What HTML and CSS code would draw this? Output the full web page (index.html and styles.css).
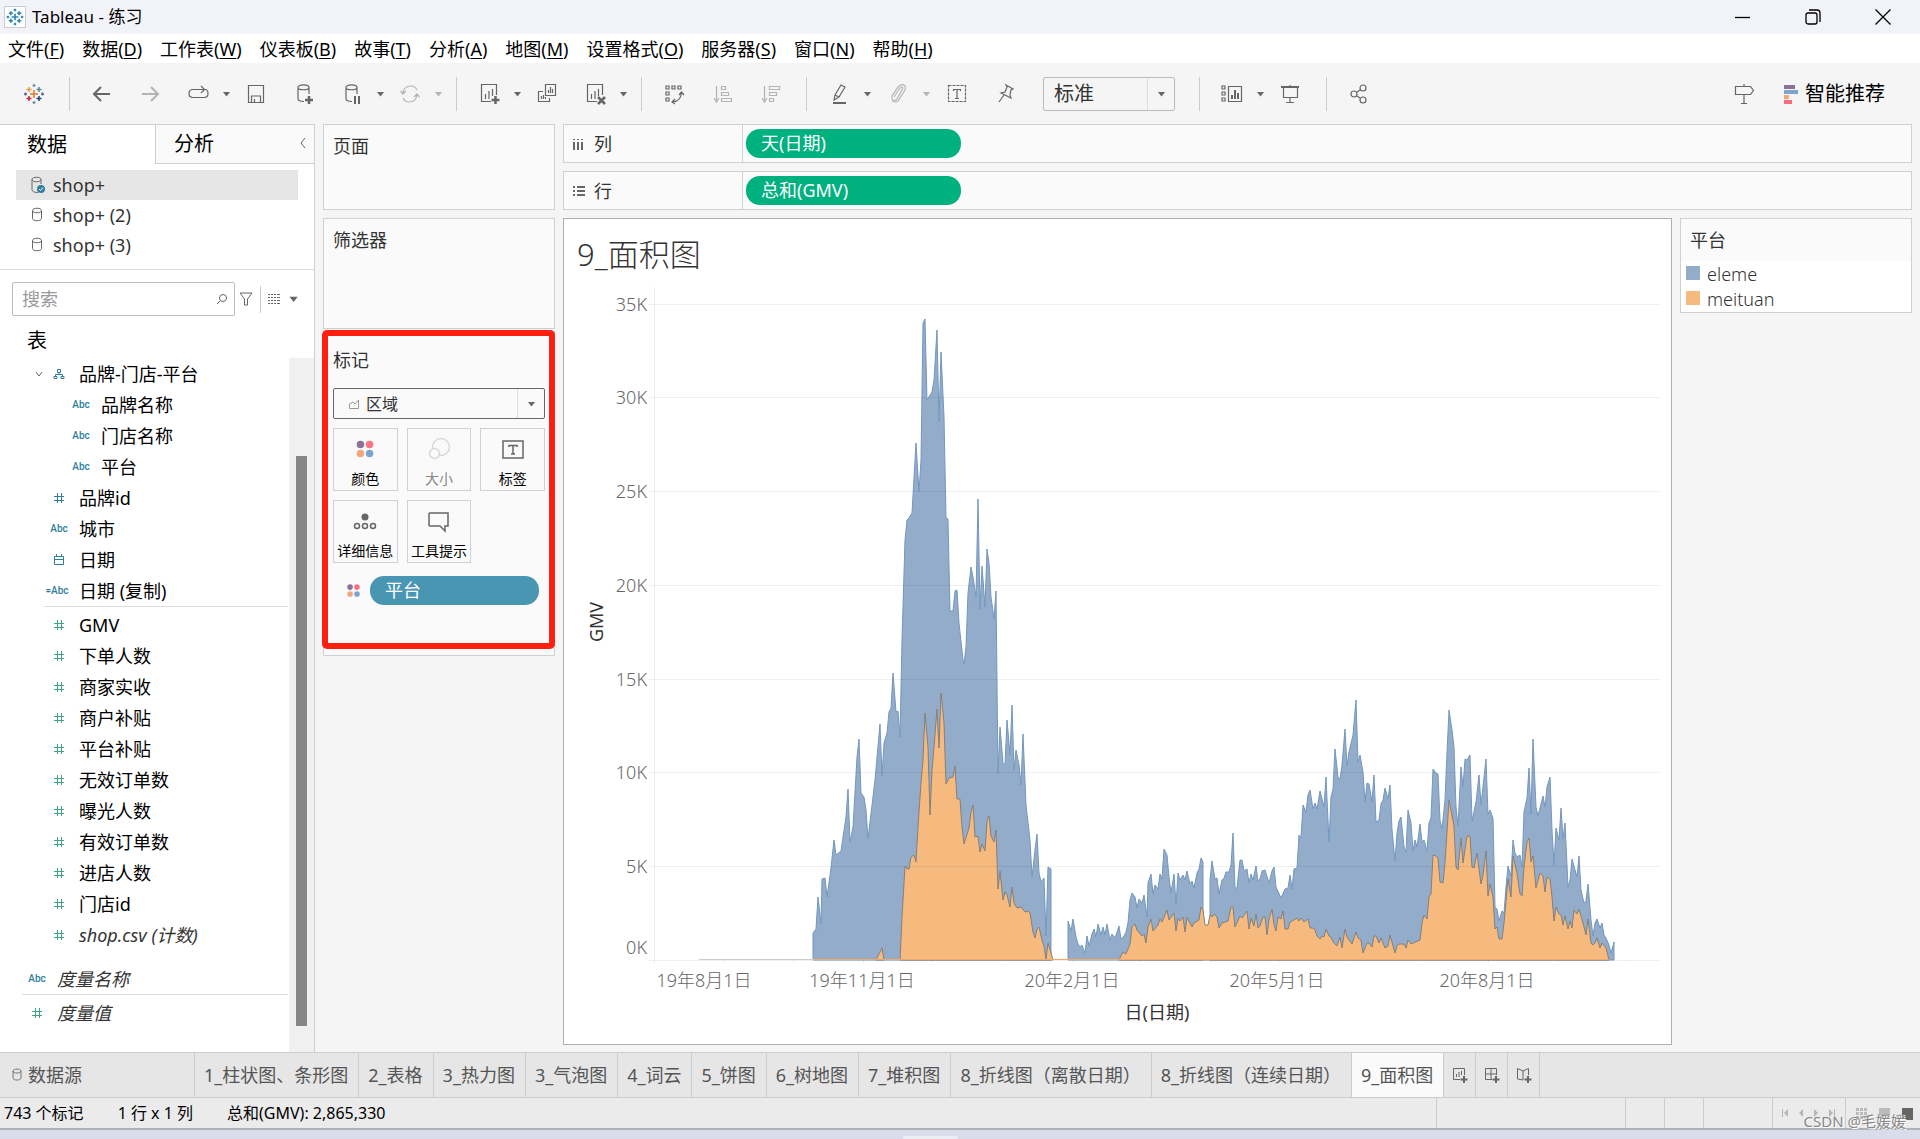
FILE: index.html
```html
<!DOCTYPE html>
<html lang="zh-CN">
<head>
<meta charset="utf-8">
<title>Tableau - 练习</title>
<meta name="viewport" content="width=device-width, initial-scale=1">
<link rel="stylesheet" href="styles.css">
</head>
<body>
<svg class="defs" aria-hidden="true">
  <symbol id="logo" viewBox="0 0 24 24"><path d="M12 8v8M8 12h8M7 5v5M4.500 7.500h5M17 5v5M14.500 7.500h5M7 14v5M4.500 16.500h5M17 14v5M14.500 16.500h5M12 2v3M10.500 3.500h3M12 19v3M10.500 20.500h3M3.500 10.500v3M2 12h3M20.500 10.500v3M19 12h3"/></symbol>
  <symbol id="caret" viewBox="0 0 12 12"><path class="solid" d="M3 4h7L6.500 8.500z"/></symbol>
  <symbol id="hash" viewBox="0 0 12 12"><path d="M4.500 1v10M8.500 1v10M1 4.500h10M1 8.500h10"/></symbol>
  <symbol id="db" viewBox="0 0 12 16"><path d="M1.500 3.500v8c0 3 9 3 9 0v-8M1.500 3.500c0-3 9-3 9 0s-9 3-9 0z"/></symbol>
  <symbol id="sheet-chart" viewBox="0 0 24 24"><path d="M14 19.500H4.500v-17h15V13M8.500 17v-5M12 17V9M15.500 14V7"/></symbol>
  <symbol id="dots" viewBox="0 0 24 24"><circle cx="6.500" cy="6.500" r="4.500" fill="#8a7299"/><circle cx="17.500" cy="6.500" r="4.500" fill="#fa7484"/><circle cx="6.500" cy="17.500" r="4.500" fill="#f2a77b"/><circle cx="17.500" cy="17.500" r="4.500" fill="#7fa4cc"/></symbol>
</svg>

<header class="titlebar">
  <svg class="app-icon"><use href="#logo"/></svg>
  <h1>Tableau - 练习</h1>
  <div class="window-buttons">
    <button type="button" aria-label="最小化"><svg viewBox="0 0 18 18"><path d="M1 9.500h15"/></svg></button>
    <button type="button" aria-label="还原"><svg viewBox="0 0 18 18"><path d="M5 2h8q3 0 3 3v9"/><rect x="2" y="5" width="11" height="11" rx="2"/></svg></button>
    <button type="button" aria-label="关闭"><svg viewBox="0 0 18 18"><path d="M1.500 1.500l15 15M16.500 1.500l-15 15"/></svg></button>
  </div>
</header>

<nav class="menubar" aria-label="菜单">
  <button type="button">文件(<u>F</u>)</button><button type="button">数据(<u>D</u>)</button><button type="button">工作表(<u>W</u>)</button><button type="button">仪表板(<u>B</u>)</button><button type="button">故事(<u>T</u>)</button><button type="button">分析(<u>A</u>)</button><button type="button">地图(<u>M</u>)</button><button type="button">设置格式(<u>O</u>)</button><button type="button">服务器(<u>S</u>)</button><button type="button">窗口(<u>N</u>)</button><button type="button">帮助(<u>H</u>)</button>
</nav>

<div class="toolbar" role="toolbar" aria-label="工具栏">
  <button type="button" class="tool home" aria-label="起始页"><svg viewBox="0 0 24 24"><path stroke="#e8762c" d="M12 8v8M8 12h8"/><path stroke="#eb9b3c" d="M7 5v5M4.500 7.500h5"/><path stroke="#59879b" d="M17 5v5M14.500 7.500h5"/><path stroke="#c72037" d="M7 14v5M4.500 16.500h5"/><path stroke="#1f447e" d="M17 14v5M14.500 16.500h5"/><path stroke="#7b8fb5" d="M12 2v3M10.500 3.500h3M12 19v3M10.500 20.500h3"/><path stroke="#5b6591" d="M3.500 10.500v3M2 12h3M20.500 10.500v3M19 12h3"/></svg></button>
  <div class="group">
    <button type="button" class="tool" aria-label="撤消"><svg viewBox="0 0 24 24"><path stroke-width="2" d="M4 12h16M11 5l-7 7 7 7"/></svg></button>
    <button type="button" class="tool off" aria-label="重做"><svg viewBox="0 0 24 24"><path stroke-width="2" d="M4 12h16M13 5l7 7-7 7"/></svg></button>
    <div class="split"><button type="button" class="tool" aria-label="重播"><svg viewBox="0 0 24 24"><path d="M9 15.500H7q-4 0-4-4t4-4h11M15 4l3.500 3.500L15 11M19 7.500q3 0 3 4t-4 4H9"/></svg></button><button type="button" class="drop" aria-label="更多"><svg><use href="#caret"/></svg></button></div>
    <button type="button" class="tool" aria-label="保存"><svg viewBox="0 0 24 24"><path d="M4.500 3.500h15v17h-15zM7.500 20v-6h9v6M10.500 20v-3"/></svg></button>
    <button type="button" class="tool" aria-label="新建数据源"><svg viewBox="0 0 24 24"><path d="M12 19.500q-6 0-6-3v-11c0-3.500 11-3.500 11 0V12M6 5.500c0 3 11 3 11 0"/><path stroke-width="2.500" d="M17 14v8M13 18h8"/></svg></button>
    <div class="split"><button type="button" class="tool" aria-label="暂停更新"><svg viewBox="0 0 24 24"><path d="M12 19.500q-6 0-6-3v-11c0-3.500 11-3.500 11 0V12M6 5.500c0 3 11 3 11 0"/><path stroke-width="2" d="M15 14v8M19 14v8"/></svg></button><button type="button" class="drop" aria-label="更多"><svg><use href="#caret"/></svg></button></div>
    <div class="split off"><button type="button" class="tool" aria-label="运行更新"><svg viewBox="0 0 24 24"><path d="M5 11q1-7 8-7 4 0 6 4M19 13q-1 7-8 7-4 0-6-4M2.500 9L5 12l3-3M16 15l3-3 2.500 3"/></svg></button><button type="button" class="drop" aria-label="更多"><svg><use href="#caret"/></svg></button></div>
  </div>
  <div class="group">
    <div class="split"><button type="button" class="tool" aria-label="新建工作表"><svg viewBox="0 0 24 24"><use href="#sheet-chart"/><path stroke-width="2.500" d="M18.500 14v8M14.500 18h8"/></svg></button><button type="button" class="drop" aria-label="更多"><svg><use href="#caret"/></svg></button></div>
    <button type="button" class="tool" aria-label="复制工作表"><svg viewBox="0 0 24 24"><path d="M10.500 2.500h10v11h-10zM13.500 11V8M15.500 11V5M17.500 11V7M8 9.500H3.500v10h11V16M6.500 17v-3M8.500 17v-4M10.500 17v-2"/></svg></button>
    <div class="split"><button type="button" class="tool" aria-label="清除工作表"><svg viewBox="0 0 24 24"><use href="#sheet-chart"/><path stroke-width="2.500" d="M15 15l7 7M22 15l-7 7"/></svg></button><button type="button" class="drop" aria-label="更多"><svg><use href="#caret"/></svg></button></div>
  </div>
  <div class="group">
    <button type="button" class="tool" aria-label="交换行和列"><svg viewBox="0 0 24 24"><path d="M4 4h3v3H4zM10 4h3v3h-3zM16 4h3v3h-3zM4 10h3v3H4zM4 16h3v3H4zM19.500 10q0 9-9 10M17 13l2.500-3 2.500 3M13 17l-3 3 3 2"/></svg></button>
    <button type="button" class="tool off" aria-label="升序排序"><svg viewBox="0 0 24 24"><path d="M6.500 4v15M4 16l2.500 4L9 16M11.500 4.500h4v3h-4zM11.500 10.500h7v3h-7zM11.500 16.500h10v3h-10z"/></svg></button>
    <button type="button" class="tool off" aria-label="降序排序"><svg viewBox="0 0 24 24"><path d="M6.500 4v15M4 16l2.500 4L9 16M11.500 4.500h10v3h-10zM11.500 10.500h7v3h-7zM11.500 16.500h4v3h-4z"/></svg></button>
  </div>
  <div class="group wide">
    <div class="split"><button type="button" class="tool" aria-label="突出显示"><svg viewBox="0 0 24 24"><path d="M8 13l6-10 4 2-6 10zM8 13l-1 5 5-3"/><path stroke-width="2" d="M6 21h13"/></svg></button><button type="button" class="drop" aria-label="更多"><svg><use href="#caret"/></svg></button></div>
    <div class="split off"><button type="button" class="tool" aria-label="组成员"><svg viewBox="0 0 24 24"><path d="M8 15l6-9q2-2 3 0l-6 11q-3 3-5 0v-3l6-9q4-4 7-1 1 2 0 4l-7 11q-3 2-6 0"/></svg></button><button type="button" class="drop" aria-label="更多"><svg><use href="#caret"/></svg></button></div>
    <button type="button" class="tool" aria-label="显示标记标签"><svg viewBox="0 0 24 24"><rect x="3.500" y="3.500" width="17" height="16" stroke-dasharray="3 1"/><path d="M8.500 9V7.500h7V9M12 8v9M10 16.500h4"/></svg></button>
    <button type="button" class="tool" aria-label="固定轴"><svg viewBox="0 0 24 24"><path d="M12 3l7 4-2 1-1 5 1 3-10-5 4-1 2-5zM10 13l-5 7"/></svg></button>
    <div class="fit"><select aria-label="适合"><option>标准</option></select><svg><use href="#caret"/></svg></div>
  </div>
  <div class="group">
    <div class="split"><button type="button" class="tool" aria-label="显示卡"><svg viewBox="0 0 24 24"><path d="M2 4h3v3H2zM2 10h3v3H2zM2 16h3v3H2zM8.500 4.500h13v15h-13z"/><path stroke-width="2" d="M12 17v-4M15 17V8M18 17v-6"/></svg></button><button type="button" class="drop" aria-label="更多"><svg><use href="#caret"/></svg></button></div>
    <button type="button" class="tool" aria-label="演示模式"><svg viewBox="0 0 24 24"><path stroke-width="2" d="M3 5h18"/><path d="M5.500 6v9.500h14V6M12 3v2M12 16v5M8 20.500h8"/></svg></button>
  </div>
  <div class="group">
    <button type="button" class="tool" aria-label="共享"><svg viewBox="0 0 24 24"><circle cx="7" cy="12" r="3"/><circle cx="16" cy="6" r="3"/><circle cx="16" cy="18" r="3"/><path d="M10 10l3-2M10 14l3 2"/></svg></button>
  </div>
  <div class="toolbar-end">
    <button type="button" class="tool" aria-label="数据指南"><svg viewBox="0 0 24 24"><path d="M3.500 4.500h15l3 4-3 4h-15zM12 2v2M12 13v8M9 21.500h6"/></svg></button>
    <button type="button" class="showme"><svg viewBox="0 0 15 20"><path fill="#8a7299" d="M0 1h11v4H0z"/><path fill="#7fa4cc" d="M0 6h14v4H0z"/><path fill="#f2a77b" d="M0 11h5v4H0z"/><path fill="#fa6b7d" d="M0 16h8v4H0z"/></svg>智能推荐</button>
  </div>
</div>

<main class="workspace">
  <aside class="data-pane">
    <div class="pane-tabs"><button type="button" class="active">数据</button><button type="button">分析<svg viewBox="0 0 8 12"><path d="M6 1L2 6l4 5"/></svg></button></div>
    <ul class="sources">
      <li class="selected"><svg viewBox="0 0 16 20"><path d="M8 17.500q-6 0-6-3v-10c0-3 9-3 9 0V9M2 4.500c0 3 9 3 9 0"/><circle cx="11" cy="14" r="4" fill="#2f7e9e" stroke="none"/><path stroke="#fff" d="M9 14l1.500 1.500L13 12.500"/></svg>shop+</li>
      <li><svg viewBox="0 0 16 20"><use href="#db" width="12" height="16" x="1" y="2"/></svg>shop+ (2)</li>
      <li><svg viewBox="0 0 16 20"><use href="#db" width="12" height="16" x="1" y="2"/></svg>shop+ (3)</li>
    </ul>
    <div class="search-row">
      <div class="search"><input type="search" placeholder="搜索" aria-label="搜索字段"><svg viewBox="0 0 12 12"><circle cx="7" cy="5" r="3.500"/><path d="M4.500 7.500L1 11"/></svg></div>
      <button type="button" aria-label="筛选"><svg viewBox="0 0 16 16"><path d="M2 2h12L9.500 8v6h-3V8z"/></svg></button>
      <button type="button" class="view" aria-label="查看方式"><svg viewBox="0 0 14 14"><path d="M1 2.500h2M4 2.500h2M7 2.500h2M10 2.500h3M1 5.500h2M4 5.500h2M7 5.500h2M10 5.500h3M1 8.500h2M4 8.500h2M7 8.500h2M10 8.500h3M1 11.500h2M4 11.500h2M7 11.500h2M10 11.500h3"/></svg><svg class="small"><use href="#caret"/></svg></button>
    </div>
    <h2>表</h2>
    <div class="field-scroll">
      <div class="fields">
        <ul class="dims">
          <li class="folder"><svg class="chev" viewBox="0 0 10 10"><path d="M2 3l3 4 3-4"/></svg><span class="type"><svg viewBox="0 0 12 12"><path d="M4.500 1.500h3v3h-3zM1 8.500h3v2H1zM8 8.500h3v2H8zM6 5v1.500M2.500 8V6.500h7V8"/></svg></span>品牌-门店-平台</li>
          <li class="child"><span class="type">Abc</span>品牌名称</li>
          <li class="child"><span class="type">Abc</span>门店名称</li>
          <li class="child"><span class="type">Abc</span>平台</li>
          <li><span class="type"><svg><use href="#hash"/></svg></span>品牌id</li>
          <li><span class="type">Abc</span>城市</li>
          <li><span class="type"><svg viewBox="0 0 12 12"><path d="M1.500 2.500h9v8h-9zM1.500 5.500h9M3.500 0v2.500M8.500 0v2.500"/></svg></span>日期</li>
          <li><span class="type calc">=Abc</span>日期 (复制)</li>
        </ul>
        <ul class="measures">
          <li><span class="type"><svg><use href="#hash"/></svg></span>GMV</li>
          <li><span class="type"><svg><use href="#hash"/></svg></span>下单人数</li>
          <li><span class="type"><svg><use href="#hash"/></svg></span>商家实收</li>
          <li><span class="type"><svg><use href="#hash"/></svg></span>商户补贴</li>
          <li><span class="type"><svg><use href="#hash"/></svg></span>平台补贴</li>
          <li><span class="type"><svg><use href="#hash"/></svg></span>无效订单数</li>
          <li><span class="type"><svg><use href="#hash"/></svg></span>曝光人数</li>
          <li><span class="type"><svg><use href="#hash"/></svg></span>有效订单数</li>
          <li><span class="type"><svg><use href="#hash"/></svg></span>进店人数</li>
          <li><span class="type"><svg><use href="#hash"/></svg></span>门店id</li>
          <li class="auto"><span class="type"><svg><use href="#hash"/></svg></span>shop.csv (计数)</li>
        </ul>
        <ul class="dims root"><li class="auto"><span class="type">Abc</span>度量名称</li></ul>
        <ul class="measures root"><li class="auto"><span class="type"><svg><use href="#hash"/></svg></span>度量值</li></ul>
      </div>
      <div class="scrollbar"><div class="thumb"></div></div>
    </div>
  </aside>

  <section class="cards">
    <div class="card pages"><h3>页面</h3></div>
    <div class="card filters"><h3>筛选器</h3></div>
    <div class="card marks">
      <h3>标记</h3>
      <div class="mark-type"><svg class="area" viewBox="0 0 12 12"><path d="M1.500 10.500V6L5 4l2 2 3.500-4v8.500z"/></svg><select aria-label="标记类型"><option>区域</option></select><svg class="arrow"><use href="#caret"/></svg></div>
      <div class="mark-grid">
        <button type="button"><svg viewBox="0 0 24 24"><use href="#dots" x="2" y="2" width="20" height="20"/></svg>颜色</button>
        <button type="button" class="off"><svg viewBox="0 0 24 24"><circle cx="14" cy="10" r="8.500"/><circle cx="7.500" cy="16.500" r="5" fill="#fafafa"/></svg>大小</button>
        <button type="button"><svg viewBox="0 0 24 24"><rect x="2" y="4" width="20" height="17"/><path d="M8 10V8.500h8V10M12 9v8M10 17h4"/></svg>标签</button>
        <button type="button"><svg viewBox="0 0 24 24"><circle cx="12" cy="8" r="3.500" fill="#666" stroke="none"/><circle cx="4" cy="17" r="2.500"/><circle cx="12" cy="17" r="2.500"/><circle cx="20" cy="17" r="2.500"/></svg>详细信息</button>
        <button type="button"><svg viewBox="0 0 24 24"><path d="M3 4h18v13h-3v5l-5-5H3q-1 0-1-1V5q0-1 1-1z"/></svg>工具提示</button>
      </div>
      <div class="mark-pill"><svg><use href="#dots"/></svg><span class="pill blue">平台</span></div>
      <div class="highlight"></div>
    </div>
  </section>

  <section class="view-area">
    <div class="shelf"><div class="shelf-name"><svg viewBox="0 0 12 12"><path stroke-width="2" d="M1 1v1M1 4v8M5 1v1M5 4v8M9 1v1M9 4v8"/></svg>列</div><span class="pill">天(日期)</span></div>
    <div class="shelf"><div class="shelf-name"><svg viewBox="0 0 12 12"><path stroke-width="2" d="M0 2h2M4 2h8M0 6h2M4 6h8M0 10h2M4 10h8"/></svg>行</div><span class="pill">总和(GMV)</span></div>
    <div class="view-row">
      <article class="sheet">
        <h2>9_面积图</h2>
        <svg class="chart" viewBox="564 282 1107 762" role="img" aria-label="GMV 面积图">
          <path class="eleme" d="M813 960V933L816 929 818 897 821 924 822 879 825 878 827 897 831 868 834 840 836 855 841 851 846 817 848 789 850 842 853 827 857 757 859 739 861 793 864 797 866 810 868 839 875 780 880 724 882 776 884 743 887 733 889 712 891 708 893 673 896 712 898 711 900 737 902 640 905 540 907 520 909 518 912 513 916 443 919 492 921 460 923 323 925 319 927 400 932 392 934 380 937 330 939 422 941 352 944 417 946 518 948 519 950 611 953 611 955 591 957 590 959 623 963 660 964 664 966 647 968 593 971 567 973 577 976 597 978 499 980 609 982 566 985 607 987 549 989 563 991 597 994 619 996 591 998 774 1000 727 1003 763 1005 765 1007 720 1010 755 1012 705 1014 770 1016 750 1019 765 1021 785 1023 734 1026 805 1030 840 1032 877 1035 850 1037 834 1039 873 1041 882 1044 878 1046 936 1048 867 1051 869V960z"/>
          <path class="eleme" d="M1068 960V921L1071 931 1073 919 1076 937 1078 944 1080 947 1082 945 1085 953 1087 936 1089 946 1092 934 1094 929 1096 937 1098 924 1101 935 1103 927 1105 935 1107 924 1110 940 1112 934 1115 938 1119 926 1121 939 1124 936 1126 932 1128 923 1130 900 1132 893 1135 897 1137 908 1139 899 1142 903 1144 895 1147 917 1148 883 1151 874 1153 894 1155 885 1158 889 1160 874 1162 879 1164 849 1167 855 1169 877 1171 893 1174 874 1176 905 1178 873 1180 880 1183 875 1185 880 1187 871 1190 884 1192 881 1194 888 1197 873 1199 869 1201 858 1203 862V960z"/>
          <path class="eleme" d="M1210 960V880L1212 861 1215 879 1217 878 1219 894 1222 880 1224 878 1226 872 1229 872 1231 865 1233 833 1235 888 1237 888 1240 860 1242 860 1244 871 1247 869 1249 883 1251 874 1253 880 1256 866 1258 881 1260 879 1262 871 1265 870 1269 883 1272 871 1274 867 1276 887 1281 898 1285 889 1288 888 1290 875 1292 889 1294 869 1297 868 1299 835 1301 838 1303 805 1306 812 1308 795 1310 790 1313 809 1315 803 1317 809 1320 791 1324 807 1326 777 1329 842 1331 797 1333 789 1335 749 1338 777 1340 779 1342 765 1345 729 1347 766 1349 752 1353 735 1356 700 1358 762 1360 755 1363 772 1365 802 1367 783 1369 784 1372 802 1374 775 1376 822 1379 820 1381 804 1383 800 1385 788 1388 799 1390 785 1392 830 1395 861 1397 833 1399 821 1401 817 1404 847 1406 852 1408 810 1411 823 1413 851 1415 840 1417 847 1420 824 1422 842 1424 840 1427 851 1429 823 1431 818 1433 769 1436 773 1438 774 1440 820 1442 829 1445 800 1447 753 1449 710 1452 730 1454 747 1456 807 1458 826 1461 767 1463 787 1465 759 1467 760 1470 755 1472 821 1476 802 1479 775 1481 805 1486 759 1488 814 1490 810 1493 818 1495 907 1497 909 1499 921 1502 911 1504 913 1506 887 1508 866 1511 876 1513 840 1515 853 1517 857 1520 855 1522 867 1524 812 1527 798 1529 768 1531 814 1533 739 1536 807 1538 816 1543 796 1545 807 1547 787 1550 777 1552 830 1554 865 1556 828 1559 840 1561 808 1563 839 1565 823 1568 887 1570 880 1572 859 1577 877 1579 856 1581 890 1584 903 1586 901 1588 884 1591 920 1593 936 1595 923 1597 919 1600 928 1602 923 1604 935 1606 938 1609 945 1611 953 1614 942V960z"/>
          <path class="meituan" d="M876 960L882 948 884 960zM900 960L902 917 905 866 907 869 909 869 911 857 914 855 916 862 918 827 921 783 923 760 925 713 928 747 930 815 932 770 934 747 937 709 939 748 941 693 944 723 946 784 949 778 953 777 955 766 957 799 960 799 962 827 964 844 969 828 971 812 973 805 975 837 978 836 980 852 982 844 985 851 987 821 989 816 991 836 994 842 996 830 998 889 1000 871 1003 900 1005 892 1007 895 1010 907 1012 887 1014 903 1017 908 1021 907 1025 912 1028 911 1030 913 1033 932 1035 938 1037 929 1039 927 1042 940 1044 946 1046 960 1048 943 1051 953 1053 960z"/>
          <path class="meituan" d="M1119 960L1123 952 1126 954 1130 944 1132 927 1135 924 1137 930 1142 936 1144 934 1146 943 1148 927 1151 919 1153 931 1158 925 1160 919 1162 922 1167 910 1169 920 1174 913 1176 931 1178 918 1180 921 1183 917 1185 932 1187 917 1192 927 1194 923 1199 920 1201 907 1203 910 1205 925 1208 925 1210 915 1212 917 1214 914 1217 917 1219 928 1222 923 1228 921 1231 907 1233 907 1235 927 1240 916 1242 918 1247 911 1249 929 1251 918 1254 926 1256 914 1258 928 1260 926 1263 917 1265 917 1267 935 1269 919 1272 909 1274 925 1276 931 1278 917 1281 919 1283 911 1285 929 1288 929 1290 922 1292 921 1297 918 1299 921 1301 918 1304 922 1308 919 1310 928 1313 928 1315 930 1317 936 1320 939 1322 936 1324 937 1326 929 1329 936 1331 937 1333 942 1337 946 1340 937 1342 948 1345 929 1347 937 1352 944 1356 932 1358 938 1361 940 1363 953 1367 943 1369 943 1372 947 1374 936 1376 936 1379 943 1381 938 1385 948 1388 946 1390 935 1395 953 1397 946 1399 944 1404 944 1406 948 1408 940 1411 944 1420 940 1422 923 1424 915 1427 919 1429 897 1431 894 1433 855 1436 856 1438 858 1440 882 1443 883 1445 863 1449 800 1454 826 1456 867 1458 870 1461 838 1463 863 1467 836 1470 836 1472 867 1474 868 1477 853 1481 884 1483 875 1486 851 1488 896 1490 884 1493 897 1495 929 1497 927 1499 939 1502 939 1504 923 1508 879 1511 897 1513 856 1517 873 1520 894 1522 896 1524 867 1527 842 1529 838 1531 862 1533 856 1536 888 1540 873 1543 876 1545 892 1547 877 1550 879 1552 897 1554 921 1556 907 1559 914 1561 915 1563 925 1565 916 1568 929 1570 921 1572 928 1574 910 1577 914 1579 909 1584 927 1586 935 1588 919 1591 943 1593 945 1595 943 1597 938 1600 948 1602 943 1606 948 1609 960z"/>
          <path class="zero" d="M699 959.500H814"/><path class="zero orange" d="M814 959.500H1609"/>
          <path class="grid" d="M649 304.500H1660M649 397.500H1660M649 491.500H1660M649 585.500H1660M649 679.500H1660M649 772.500H1660M649 866.500H1660M649 960.500H1660M654.500 287V964M724.500 960v2M793.500 960v2M863.500 960v4M932.500 960v2M1002.500 960v2M1073.500 960v4M1139.500 960v2M1210.500 960v2M1278.500 960v4M1349.500 960v2M1418.500 960v2M1488.500 960v4M1558.500 960v2M1626.500 960v2"/>
          <g class="tick end"><text x="647" y="311">35K</text><text x="647" y="404">30K</text><text x="647" y="498">25K</text><text x="647" y="592">20K</text><text x="647" y="686">15K</text><text x="647" y="779">10K</text><text x="647" y="873">5K</text><text x="647" y="954">0K</text></g>
          <g class="tick mid"><text x="704" y="987">19年8月1日</text><text x="862" y="987">19年11月1日</text><text x="1072" y="987">20年2月1日</text><text x="1277" y="987">20年5月1日</text><text x="1487" y="987">20年8月1日</text></g>
          <g class="axis-title mid"><text x="1157" y="1019">日(日期)</text><text transform="translate(603 622) rotate(-90)">GMV</text></g>
        </svg>
      </article>
      <aside class="legend"><h3>平台</h3><ul><li><i class="sw blue"></i>eleme</li><li><i class="sw orange"></i>meituan</li></ul></aside>
    </div>
  </section>
</main>

<nav class="sheet-tabs" aria-label="工作表">
  <button type="button" class="source"><svg viewBox="0 0 12 16"><use href="#db"/></svg>数据源</button><button type="button">1_柱状图、条形图</button><button type="button">2_表格</button><button type="button">3_热力图</button><button type="button">3_气泡图</button><button type="button">4_词云</button><button type="button">5_饼图</button><button type="button">6_树地图</button><button type="button">7_堆积图</button><button type="button">8_折线图（离散日期）</button><button type="button">8_折线图（连续日期）</button><button type="button" class="current">9_面积图</button>
  <button type="button" class="new" aria-label="新建工作表"><svg viewBox="0 0 18 18"><path d="M9 13.500H2.500v-11h11V9M5.500 11V8M8 11V6M10.500 9V5"/><path stroke-width="2" d="M13 10v7M9.500 13.500h7"/></svg></button>
  <button type="button" class="new" aria-label="新建仪表板"><svg viewBox="0 0 18 18"><path d="M9 13.500H2.500v-11h11V9M8 2.500v11M2.500 8h11"/><path stroke-width="2" d="M13 10v7M9.500 13.500h7"/></svg></button>
  <button type="button" class="new" aria-label="新建故事"><svg viewBox="0 0 18 18"><path d="M8 14l-5.500-1V2.500L8 5l5.500-2.500V9M8 5v9"/><path stroke-width="2" d="M13 10v7M9.500 13.500h7"/></svg></button>
</nav>

<footer class="status">
  <span class="count">743 个标记</span><span class="count">1 行 x 1 列</span><span class="count">总和(GMV): 2,865,330</span>
  <div class="cells"><i class="c1"></i><i class="c2"></i><i class="c2"></i><i class="c3"></i>
    <span class="pager"><svg viewBox="0 0 60 12"><path class="solid" d="M2 2h1v8H2zM8 2v8L4 6zM23 2v8l-4-4zM34 2v8l4-4zM49 2v8l4-4zM54 2h1v8h-1z"/></svg></span>
    <span class="modes"><svg viewBox="0 0 60 14"><path fill="#bbb" d="M2 1h3v3H2zM6 1h3v3H6zM10 1h3v3h-3zM2 5h3v3H2zM6 5h3v3H6zM10 5h3v3h-3zM2 9h3v3H2zM6 9h3v3H6zM10 9h3v3h-3zM25 1h11v9H25z"/><path fill="#666" d="M48 1h11v12H48z"/></svg></span>
  </div>
  <span class="watermark">CSDN @毛媛媛</span>
</footer>
<div class="taskbar"><div class="dock"></div></div>
</body>
</html>
```
FILE: styles.css
```css
* { box-sizing: border-box; }
body {
  margin: 0;
  min-height: 100vh;
  display: flex;
  flex-direction: column;
  background: #f5f5f5;
  color: #000;
  font: 18px/24px "Noto Sans", "Noto Sans CJK SC", sans-serif;
}
button, select, input { font: inherit; color: inherit; border: 0; margin: 0; padding: 0; background: none; }
ul { list-style: none; margin: 0; padding: 0; }
h1, h2, h3 { margin: 0; font-weight: 400; font-size: 18px; }
svg { fill: none; stroke: #666; flex: none; }
.solid { fill: #666; stroke: none; }
.defs { position: absolute; width: 0; height: 0; }

.titlebar { display: flex; align-items: center; height: 34px; padding: 0 28px 0 4px; background: #f1f3f9; }
.titlebar h1 { font-size: 17px; margin-left: 6px; }
.app-icon { width: 22px; height: 22px; background: #fff; border: 1px solid #ccc; stroke: #2f88b7; stroke-width: 2; }
.window-buttons { display: flex; gap: 52px; margin-left: auto; }
.window-buttons button { width: 18px; height: 18px; display: flex; }
.window-buttons svg { stroke: #000; stroke-width: 1.3; width: 18px; height: 18px; }

.menubar { display: flex; gap: 18px; height: 29px; padding: 0 8px; background: #fff; align-items: center; }
.menubar button { white-space: nowrap; }
.menubar u { text-underline-offset: 2px; }

.toolbar { display: flex; align-items: center; height: 61px; padding: 0 35px 0 22px; }
.group { display: flex; align-items: center; gap: 24px; height: 34px; padding: 0 24px 0 20px; border-left: 1px solid #ccc; }
.group.wide { gap: 25px; }
.tool { width: 24px; height: 24px; display: flex; }
.tool svg { width: 24px; height: 24px; stroke-width: 1.2; }
.home { margin-right: 23px; }
.home svg { stroke-width: 1.5; }
.split { display: flex; align-items: center; gap: 10px; margin-right: -12px; }
.drop, .drop svg { width: 12px; height: 12px; display: flex; }
.off { opacity: .45; }
.fit { display: flex; align-items: center; width: 132px; height: 34px; border: 1px solid #bbb; border-radius: 2px; color: #333; }
.fit select, .mark-type select { appearance: none; flex: 1; align-self: stretch; }
.fit select { padding-left: 10px; font-size: 20px; line-height: 32px; border-right: 1px solid #ddd; }
.fit svg { width: 12px; height: 12px; margin: 0 7px; }
.toolbar-end { display: flex; align-items: center; gap: 28px; margin-left: auto; }
.showme { display: flex; align-items: center; gap: 6px; font-size: 20px; }
.showme svg { width: 15px; height: 20px; stroke: none; }

.workspace { flex: 1; display: grid; grid-template-columns: 315px 232px minmax(0, 1fr); column-gap: 8px; padding-right: 8px; }
.data-pane { display: flex; flex-direction: column; background: #fff; border: 1px solid #d0d0d0; border-width: 1px 1px 0 0; }
.pane-tabs { display: grid; grid-template-columns: 155px 1fr; height: 39px; font-size: 20px; }
.pane-tabs button { text-align: left; padding-left: 18px; border: 1px solid #d0d0d0; border-width: 0 0 1px 1px; background: #fafafa; display: flex; align-items: center; }
.pane-tabs .active { border: 0; background: #fff; padding-left: 27px; }
.pane-tabs svg { width: 8px; height: 12px; margin: 0 7px 2px auto; }
.sources { padding: 6px 16px 9px; border-bottom: 1px solid #ddd; color: #333; }
.sources li { display: flex; align-items: center; gap: 7px; height: 30px; padding-left: 14px; }
.sources .selected { background: #e6e6e6; }
.sources svg { width: 16px; height: 20px; }
.search-row { display: flex; align-items: center; height: 58px; padding: 0 14px 0 12px; }
.search-row button { display: flex; align-items: center; height: 27px; padding: 0 6px 0 3px; }
.search-row svg { width: 16px; height: 16px; }
.search { display: flex; align-items: center; width: 223px; height: 34px; border: 1px solid #bbb; border-radius: 2px; }
.search input { flex: 1; min-width: 0; align-self: stretch; padding-left: 9px; outline: 0; }
.search input::placeholder { color: #999; }
.search svg { width: 12px; height: 12px; margin-right: 6px; }
.search-row .view { border-left: 1px solid #ccc; padding-left: 6px; gap: 5px; }
.search-row .view svg { width: 14px; height: 14px; }
.data-pane h2 { font-size: 20px; height: 30px; line-height: 26px; padding-left: 27px; }
.field-scroll { flex: 1; display: flex; }
.fields { flex: 1; padding-right: 1px; }
.fields li { display: flex; align-items: center; gap: 5px; height: 31px; white-space: nowrap; }
.fields ul { margin-left: 44px; }
.fields .dims { border-bottom: 1px solid #ddd; margin-bottom: 2px; }
.fields .root { margin-left: 22px; }
.fields .dims.root { margin-top: 13px; }
.fields .folder { margin-left: -10px; gap: 0; }
.folder .type { margin-right: 5px; }
.fields .child { padding-left: 22px; }
.chev { width: 10px; height: 10px; }
.type { display: flex; justify-content: center; width: 30px; font: 500 10px/14px Roboto, sans-serif; color: #2f7e9e; }
.type.calc { padding-right: 4px; }
.type svg { width: 12px; height: 12px; stroke: #2f7e9e; }
.measures .type svg { stroke: #3fa57f; }
.auto { font-style: italic; color: #333; }
.auto .type { font-style: normal; }
.scrollbar { width: 25px; background: #f0f0f0; display: grid; grid-template-rows: 98fr 569fr 26fr; padding: 0 7px; }
.thumb { grid-row: 2; background: #868686; }

.cards { display: flex; flex-direction: column; }
.card { background: #fafafa; border: 1px solid #d0d0d0; padding: 8px 9px; color: #333; }
.pages { height: 86px; }
.pages h3, .filters h3 { line-height: 26px; }
.filters { height: 111px; margin: 8px 0 2px; }
.marks { position: relative; height: 325px; padding-top: 16px; }
.highlight { position: absolute; inset: -2px -1px 6px -2px; border: 6px solid #ff1f10; border-radius: 5px; }
.mark-type { display: flex; align-items: center; height: 31px; margin: 16px 0 9px; border: 1px solid #666; border-radius: 2px; font-size: 16px; }
.mark-type .area { width: 12px; height: 12px; margin: 0 6px 0 14px; stroke: #999; }
.mark-type select { border-right: 1px solid #ddd; }
.mark-type .arrow { width: 12px; height: 12px; margin: 0 7px; }
.mark-grid { display: grid; grid-template-columns: repeat(3, 1fr); gap: 9px; }
.mark-grid button { display: flex; flex-direction: column; align-items: center; justify-content: space-between; height: 63px; padding: 8px 0 0; border: 1px solid #d0d0d0; font-size: 14px; line-height: 22px; color: #000; white-space: nowrap; }
.mark-grid svg { width: 24px; height: 24px; stroke-width: 1.5; }
.mark-grid use { stroke: none; }
.mark-grid .off { opacity: 1; color: #888; }
.mark-grid .off svg { stroke: #d8d8d8; }
.mark-pill { display: flex; align-items: center; gap: 9px; margin: 13px 6px 0 13px; }
.mark-pill svg { width: 15px; height: 15px; stroke: none; }
.pill { width: 215px; height: 29px; padding-left: 15px; border-radius: 14px; background: #00b180; color: #fff; line-height: 28px; }
.pill.blue { flex: 1; background: #4996b2; }

.view-area { display: flex; flex-direction: column; gap: 8px; padding-bottom: 7px; }
.shelf { display: flex; align-items: center; height: 39px; background: #fafafa; border: 1px solid #d0d0d0; color: #333; }
.shelf-name { display: flex; align-items: center; gap: 9px; width: 179px; height: 37px; padding-left: 9px; margin-right: 3px; border-right: 1px solid #d0d0d0; }
.shelf-name svg { width: 12px; height: 12px; }
.view-row { flex: 1; display: flex; align-items: flex-start; gap: 8px; }
.sheet { flex: 1; min-width: 0; background: #fff; border: 1px solid #b0b0b0; }
.sheet h2 { height: 63px; padding: 4px 0 0 13px; font-size: 31px; line-height: 62px; font-weight: 300; color: #333; }
.chart { display: block; width: 100%; height: auto; }
.eleme { fill: #93acc9; stroke: #7397bf; stroke-width: 1; }
.meituan { fill: #f6b97e; stroke: #868078; stroke-width: 1; }
.zero { stroke: #ccc; }
.zero.orange { stroke: #efa868; }
.grid { stroke: #000; stroke-opacity: .06; }
.chart text { stroke: none; }
.tick { font-size: 18px; font-weight: 300; fill: #666; }
.axis-title { font-size: 18px; fill: #333; }
.end { text-anchor: end; }
.mid { text-anchor: middle; }
.legend { width: 232px; background: #fff; border: 1px solid #d0d0d0; color: #333; }
.legend h3 { height: 42px; padding-left: 9px; line-height: 43px; background: #fafafa; }
.legend ul { padding: 0 0 1px 5px; font-weight: 300; }
.legend li { display: flex; align-items: center; gap: 7px; height: 25px; }
.sw { width: 14px; height: 14px; margin-bottom: 2px; }
.sw.blue { background: #93acc9; }
.sw.orange { background: #f6b97e; }

.sheet-tabs { display: flex; height: 46px; background: #e6e6e6; border: 1px solid #ccc; border-width: 1px 0; color: #555; }
.sheet-tabs button { padding: 0 10px 0 9px; border-right: 1px solid #ccc; white-space: nowrap; }
.sheet-tabs .source { display: flex; align-items: center; gap: 5px; width: 195px; padding-left: 11px; }
.sheet-tabs .source svg { width: 12px; height: 14px; }
.sheet-tabs .current { background: #fafafa; }
.sheet-tabs .new { width: 32px; padding: 0 7px; display: flex; align-items: center; }
.new svg { width: 18px; height: 18px; }

.status { position: relative; display: flex; align-items: center; gap: 34px; height: 30px; padding-left: 4px; background: #ebebeb; font-size: 16px; }
.cells { display: flex; align-self: stretch; margin-left: auto; }
.cells > * { border-left: 1px solid #ccc; }
.c1 { width: 189px; }
.c2 { width: 39px; }
.c3 { width: 69px; }
.pager, .modes { width: 73px; padding: 9px 0 0 7px; line-height: 0; }
.pager svg { width: 60px; height: 12px; opacity: .4; }
.modes { width: 75px; padding-left: 8px; }
.modes svg { width: 60px; height: 14px; stroke: none; }
.watermark { position: absolute; right: 14px; top: 12px; color: #888; text-shadow: 1px 1px #fff; line-height: 22px; font-size: 15px; }
.taskbar { height: 11px; background: #d9dcea; border-top: 2px solid #aeb0ba; padding-top: 6px; }
.dock { width: 55px; height: 3px; margin: 0 auto; background: #eceef5; border-radius: 3px 3px 0 0; position: relative; left: -30px; }
```
